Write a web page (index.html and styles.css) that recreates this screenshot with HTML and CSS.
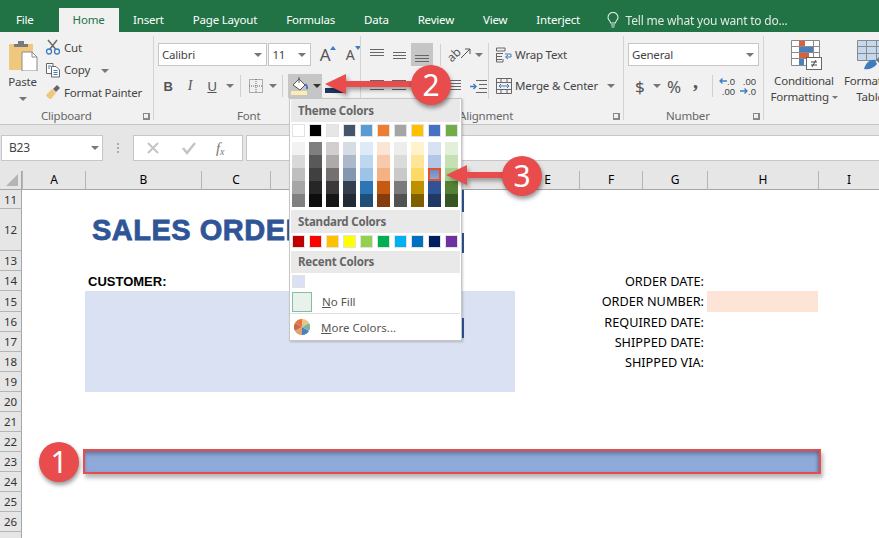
FILE: index.html
```html
<!DOCTYPE html>
<html lang="en">
<head>
    <meta charset="UTF-8">
    <title>Sales Order - Excel</title>
    <link rel="stylesheet" href="styles.css">
</head>
<body>
    <div class="tabs">
        <span class="tab tab-file">File</span>
        <span class="tab tab-active">Home</span>
        <span class="tab">Insert</span>
        <span class="tab">Page Layout</span>
        <span class="tab">Formulas</span>
        <span class="tab">Data</span>
        <span class="tab">Review</span>
        <span class="tab">View</span>
        <span class="tab">Interject</span>
        <span class="tell">
            <svg width="14" height="16" viewBox="0 0 14 16" fill="none" stroke="#fff" stroke-width="1.1"><path d="M4.6 11C4.4 8.8 2 8 2 5.4A5 5 0 0 1 12 5.4C12 8 9.6 8.8 9.4 11Z"/><path d="M5 13H9M5.6 15H8.4"/></svg>
            Tell me what you want to do...
        </span>
    </div>

    <div class="ribbon">
        <!-- Clipboard -->
        <div class="group group-clipboard">
            <div class="group-body clip-body">
                <div class="paste">
                    <svg width="30" height="30" viewBox="0 0 30 30"><rect x="1" y="3" width="24" height="26" rx="1" fill="#efc77d"/><path d="M6 6V3H10V0H16V3H20V6Z" fill="#7a7a7a"/><path d="M14 11H24L29 16V30H14Z" fill="#fff" stroke="#8a8a8a"/><path d="M24 11V16H29" fill="none" stroke="#8a8a8a"/></svg>
                    <span class="paste-label">Paste</span>
                    <span class="caret"></span>
                </div>
                <div class="clip-list">
                    <div class="clip-row">
                        <svg width="16" height="16" viewBox="0 0 16 16" fill="none"><path d="M3 1L10.500 10M12 1L5 10" stroke="#666" stroke-width="1.400"/><circle cx="4" cy="12.500" r="2.500" stroke="#3f7cbf" stroke-width="1.300"/><circle cx="12" cy="12.500" r="2.500" stroke="#3f7cbf" stroke-width="1.300"/></svg>
                        Cut
                    </div>
                    <div class="clip-row">
                        <svg width="16" height="16" viewBox="0 0 16 16" fill="#fff" stroke="#666"><path d="M1.500 1.500H8V11.500H1.500Z"/><path d="M6.500 4.500H11L14.500 8V15H6.500Z"/><path d="M8.500 8.500H12.500M8.500 10.500H12.500M8.500 12.500H12.500M3 4H6M3 6H5" stroke="#3f7cbf"/></svg>
                        Copy <span class="caret caret-copy"></span>
                    </div>
                    <div class="clip-row">
                        <svg width="16" height="16" viewBox="0 0 16 16"><path d="M1 11L7 5L11 9L6 15C4 15 2 13 1 11Z" fill="#efc77d"/><path d="M8 5L12 1L15 4L11 8Z" fill="#666"/></svg>
                        Format Painter
                    </div>
                </div>
            </div>
            <div class="group-label label-clipboard">Clipboard</div>
            <span class="launcher launcher-clipboard"></span>
        </div>

        <!-- Font -->
        <div class="group group-font">
            <div class="group-body stack">
                <div class="row">
                    <div class="combo combo-font">Calibri<span class="caret"></span></div>
                    <div class="combo combo-size">11<span class="caret"></span></div>
                    <span class="big-a">A<i class="tip tip-up"></i></span>
                    <span class="big-a small-a">A<i class="tip tip-down"></i></span>
                </div>
                <div class="row row-tools">
                    <b class="tool tool-b">B</b>
                    <i class="tool tool-i">I</i>
                    <u class="tool tool-u">U</u>
                    <span class="caret caret-u"></span>
                    <span class="sep sep-u"></span>
                    <svg class="border-icon" width="14" height="14" viewBox="0 0 14 14" fill="none" stroke="#666" stroke-dasharray="1 1"><path d="M.5.500H13.500V13.500H.5ZM7 0V14M0 7H14"/></svg>
                    <span class="caret caret-border"></span>
                    <span class="sep sep-border"></span>
                    <div class="fill-btn">
                        <svg width="18" height="20" viewBox="0 0 18 20"><path d="M2 9L8 3L14 9L9 14Z" fill="#fff" stroke="#555"/><path d="M8 1V7" stroke="#555"/><path d="M14.500 8C16 10 16.500 12 15.500 13" stroke="#3f7cbf" stroke-width="2" fill="none"/><rect x="0" y="15" width="16" height="4" fill="#ffecb3"/></svg>
                        <span class="caret caret-dark"></span>
                    </div>
                    <span class="color-bar"></span>
                </div>
            </div>
            <div class="group-label label-font">Font</div>
        </div>

        <!-- Alignment -->
        <div class="group group-align">
            <div class="group-body align-body">
                <div class="align-left">
                    <div class="row">
                        <svg class="align-icon" width="16" height="16" viewBox="0 0 16 16" stroke="#666"><path d="M1 2.500H15M1 5.500H15M1 8.500H15"/></svg>
                        <svg class="align-icon" width="16" height="16" viewBox="0 0 16 16" stroke="#666"><path d="M2 5.500H15M2 8.500H15M2 11.500H15"/></svg>
                        <span class="align-on"><svg width="16" height="16" viewBox="0 0 16 16" stroke="#666"><path d="M1 8.500H15M1 11.500H15M1 14.500H15"/></svg></span>
                        <span class="sep sep-orient"></span>
                        <span class="orient-ab">ab</span>
                        <svg class="orient" width="10" height="10" viewBox="0 0 10 10" fill="none" stroke="#555"><path d="M0 10L9 1M4 1H9V6"/></svg>
                        <span class="caret"></span>
                    </div>
                    <div class="row row-tools">
                        <svg class="align-icon" width="16" height="16" viewBox="0 0 16 16" stroke="#666"><path d="M1 2.500H15M1 11.500H15"/></svg>
                        <svg class="align-icon" width="16" height="16" viewBox="0 0 16 16" stroke="#666"><path d="M1 2.500H15M1 11.500H15"/></svg>
                        <svg class="indent" width="16" height="16" viewBox="0 0 16 16" fill="none" stroke="#666"><path d="M4 2.500H16M1 5.500H16M4 8.500H16M1 11.500H16"/></svg>
                        <svg class="indent-two" width="18" height="16" viewBox="0 0 18 16" fill="none" stroke="#666"><path d="M7 2.500H18M10 6.500H18M10 10.500H18M7 14.500H18"/><path d="M1 8.500H7M4.500 6L7 8.500L4.500 11" stroke="#3f7cbf" stroke-width="1.400"/></svg>
                    </div>
                </div>
                <div class="wrap-list">
                    <div class="wrap-row">
                        <svg width="16" height="16" viewBox="0 0 16 16" fill="none" stroke="#666"><path d="M.5 1H9V4H.5ZM.5 6.500H7M.5 9.500H6M.5 12.500H6"/><path d="M.5 6V15H7V12" /><path d="M9 7H15V10H10M12 8L9.500 10L12 12" stroke="#3f7cbf"/></svg>
                        Wrap Text
                    </div>
                    <div class="wrap-row">
                        <svg width="16" height="16" viewBox="0 0 16 16" fill="none" stroke="#666"><path d="M.5.500H15.500V15.500H.5ZM.5 4.500H15.500M.5 11.500H15.500M5 .5V4.500M11 .5V4.500M5 11.500V15.500M11 11.500V15.500"/><path d="M3 8H13M5 6L3 8L5 10M11 6L13 8L11 10" stroke="#3f7cbf"/></svg>
                        Merge &amp; Center
                        <span class="caret caret-merge"></span>
                    </div>
                </div>
            </div>
            <div class="group-label label-align">Alignment</div>
            <span class="launcher launcher-end"></span>
        </div>

        <!-- Number -->
        <div class="group group-number">
            <div class="group-body stack">
                <div class="row">
                    <div class="combo combo-number">General<span class="caret"></span></div>
                </div>
                <div class="row row-tools num-tools">
                    <span class="num-dollar">$</span>
                    <span class="caret caret-num"></span>
                    <span class="num-pct">%</span>
                    <span class="num-comma">,</span>
                    <span class="sep sep-num"></span>
                    <span class="dec">
                        <i class="dec-line"><svg width="8" height="6" viewBox="0 0 8 6" fill="none" stroke="#3f7cbf" stroke-width="1.300"><path d="M8 3H1M3.500 .5L1 3L3.500 5.500"/></svg>.0</i>
                        <i class="dec-line">.00</i>
                    </span>
                    <span class="dec dec-more">
                        <i class="dec-line">.00</i>
                        <i class="dec-line"><svg width="8" height="6" viewBox="0 0 8 6" fill="none" stroke="#3f7cbf" stroke-width="1.300"><path d="M0 3H7M4.500 .5L7 3L4.500 5.500"/></svg>.0</i>
                    </span>
                </div>
            </div>
            <div class="group-label label-number">Number</div>
            <span class="launcher launcher-end"></span>
        </div>

        <!-- Styles -->
        <div class="group group-styles">
            <div class="style-btn style-cond">
                <svg width="32" height="31" viewBox="0 0 32 31">
                    <path d="M.5.500H28.500V25.500H.5ZM.5 6.500H28.500M.5 12.500H28.500M.5 18.500H28.500M8.500 .5V25.500M22.500 .5V25.500" fill="#fff" stroke="#8a8a8a"/>
                    <rect x="8" y="1" width="6" height="5" fill="#d9603c"/><rect x="8" y="7" width="14" height="5" fill="#4a80bd"/><rect x="8" y="13" width="10" height="5" fill="#d9603c"/><rect x="8" y="19" width="5" height="6" fill="#4a80bd"/>
                    <rect x="15.500" y="17.500" width="15" height="12" fill="#fff" stroke="#666"/>
                    <path d="M20 22H26M20 25H26M25 20L21 27" stroke="#444" fill="none"/>
                </svg>
                <span>Conditional</span>
                <span>Formatting <i class="caret caret-inline"></i></span>
            </div>
            <div class="style-btn style-table">
                <svg width="32" height="31" viewBox="0 0 32 31">
                    <rect x="1" y="1" width="31" height="19" fill="#c5d9ee"/>
                    <path d="M.5.500H32M.5 6.500H32M.5 13.500H32M.5 20.500H20M.5 .5V20.500M9.500 .5V20.500M19.500 .5V20.500" fill="none" stroke="#8a8a8a"/>
                    <path d="M7 29C9 22 14 19 18 20L20 24C17 28 12 30 7 29Z" fill="#3f7cbf"/><path d="M19 20L26 13L29 16L22 23Z" fill="#777"/>
                </svg>
                <span>Format as</span>
                <span>Table</span>
            </div>
        </div>
    </div>

    <div class="formula-area">
        <div class="name-box">B23<span class="caret caret-name"></span></div>
        <span class="dots"></span>
        <div class="fx-box">
            <svg width="14" height="14" viewBox="0 0 14 14" stroke="#c4c4c4" stroke-width="2" fill="none"><path d="M2 2L12 12M12 2L2 12"/></svg>
            <svg width="14" height="14" viewBox="0 0 14 14" stroke="#c4c4c4" stroke-width="2.500" fill="none"><path d="M1 7L5 12L13 2"/></svg>
            <span class="fx">f<sub>x</sub></span>
        </div>
        <div class="formula-input"></div>
    </div>

    <div class="sheet">
        <div class="corner"><span class="corner-mark"></span></div>
        <div class="col-head">A</div>
        <div class="col-head">B</div>
        <div class="col-head">C</div>
        <div class="col-head"></div>
        <div class="col-head">E</div>
        <div class="col-head">F</div>
        <div class="col-head">G</div>
        <div class="col-head">H</div>
        <div class="col-head">I</div>

        <div class="row-head">11</div>
        <div class="row-head">12</div>
        <div class="row-head">13</div>
        <div class="row-head">14</div>
        <div class="row-head">15</div>
        <div class="row-head">16</div>
        <div class="row-head">17</div>
        <div class="row-head">18</div>
        <div class="row-head">19</div>
        <div class="row-head">20</div>
        <div class="row-head">21</div>
        <div class="row-head">22</div>
        <div class="row-head">23</div>
        <div class="row-head">24</div>
        <div class="row-head">25</div>
        <div class="row-head">26</div>
        <div class="row-head"></div>

        <div class="title">SALES ORDER</div>
        <div class="customer">CUSTOMER:</div>
        <div class="customer-box"></div>
        <div class="field field-1">ORDER DATE:</div>
        <div class="field field-2">ORDER NUMBER:</div>
        <div class="field field-3">REQUIRED DATE:</div>
        <div class="field field-4">SHIPPED DATE:</div>
        <div class="field field-5">SHIPPED VIA:</div>
        <div class="order-cell"></div>
        <div class="selected-row"></div>
    </div>

    <!-- color menu, opened over the sheet -->
    <span class="selection-edge"></span>
    <div class="menu">
        <div class="menu-head">Theme Colors</div>
        <div class="swatches" id="themeTop"></div>
        <div class="ramps" id="themeRamps"></div>
        <div class="menu-head menu-head-std">Standard Colors</div>
        <div class="swatches" id="standard"></div>
        <div class="menu-head menu-head-recent">Recent Colors</div>
        <div class="swatches"><span class="swatch swatch-recent"></span></div>
        <div class="menu-item no-fill"><span class="no-fill-box"></span><span><u>N</u>o Fill</span></div>
        <div class="menu-item more">
            <svg width="16" height="16" viewBox="0 0 16 16">
                <path d="M8 8L8 0A8 8 0 0 0 1 4Z" fill="#e8743c"/>
                <path d="M8 8L1 4A8 8 0 0 0 1 12Z" fill="#c9694a"/>
                <path d="M8 8L1 12A8 8 0 0 0 8 16Z" fill="#e0a070"/>
                <path d="M8 8L8 16A8 8 0 0 0 15 12Z" fill="#4a80bd"/>
                <path d="M8 8L15 12A8 8 0 0 0 15 4Z" fill="#7fb5a0"/>
                <path d="M8 8L15 4A8 8 0 0 0 8 0Z" fill="#e8c48a"/>
            </svg>
            <span><u>M</u>ore Colors...</span>
        </div>
    </div>

    <!-- callouts -->
    <svg class="arrow arrow-2" width="92" height="26" viewBox="0 0 92 26"><path d="M0 13L21 3V10H92V16H21V23Z" fill="#e84c4c"/></svg>
    <svg class="arrow arrow-3" width="62" height="26" viewBox="0 0 62 26"><path d="M0 13L21 3V10H62V16H21V23Z" fill="#e84c4c"/></svg>
    <div class="callout callout-1">1</div>
    <div class="callout callout-2">2</div>
    <div class="callout callout-3">3</div>

    <script src="script.js"></script>
</body>
</html>
```

FILE: styles.css
```css
* {
    box-sizing: border-box;
}

html, body {
    margin: 0;
    height: 538px;
    overflow: hidden;
}

body {
    position: relative;
    width: 879px;
    background-color: #fff;
    font-family: "Noto Sans", Arial, sans-serif;
    font-size: 11.5px;
    letter-spacing: -0.2px;
    color: #444;
}

/* tabs */
.tabs {
    display: flex;
    align-items: flex-end;
    height: 32px;
    background-color: #217346;
    color: #fff;
}

.tab {
    height: 24px;
    line-height: 23px;
    padding: 0 14.500px;
    white-space: nowrap;
}

.tab-file {
    padding: 0 25px 0 16px;
}

.tab-active {
    background-color: #f1f1f1;
    color: #217346;
    padding: 0 14px;
    width: 60px;
}

.tell {
    display: flex;
    align-items: center;
    gap: 6px;
    height: 24px;
    margin-left: 11px;
    font-size: 12px;
    white-space: nowrap;
    opacity: 0.85;
}

/* ribbon */
.ribbon {
    display: flex;
    height: 93px;
    background-color: #f1f1f1;
    border-bottom: 1px solid #c6c6c6;
    overflow: hidden;
    white-space: nowrap;
}

.group {
    position: relative;
    display: flex;
    flex-direction: column;
    flex: none;
}

.group::after {
    content: "";
    position: absolute;
    right: 0;
    top: 4px;
    bottom: 4px;
    width: 1px;
    background-color: #d4d4d4;
}

.group-clipboard { width: 154px; }
.group-font { width: 207px; }
.group-align { width: 263px; }
.group-number { width: 140px; }

.group-styles {
    flex-direction: row;
    flex: 1;
}

.group-styles::after {
    display: none;
}

.group-body {
    height: 74px;
}

.group-label {
    height: 18px;
    padding-top: 1px;
    line-height: 18px;
    color: #666;
}

.label-clipboard { padding-left: 41px; }
.label-font { padding-left: 83px; }
.label-align { padding-left: 98px; }
.label-number { padding-left: 42px; }

.launcher {
    position: absolute;
    right: 4px;
    bottom: 4px;
    width: 7px;
    height: 7px;
    border-left: 1px solid #888;
    border-top: 1px solid #888;
    border-right: 2px solid #888;
    border-bottom: 2px solid #888;
}

.caret {
    display: inline-block;
    width: 0;
    height: 0;
    border-left: 4px solid transparent;
    border-right: 4px solid transparent;
    border-top: 4px solid #777;
}

.row {
    display: flex;
    align-items: center;
    height: 23px;
}

.row-tools {
    height: 24px;
    margin-top: 8px;
}

.sep {
    width: 1px;
    height: 22px;
    background-color: #d0d0d0;
}

/* clipboard */
.clip-body {
    display: flex;
}

.paste {
    display: flex;
    flex-direction: column;
    align-items: center;
    width: 43px;
    padding-top: 9px;
    padding-left: 2px;
}

.paste-label {
    line-height: 18px;
    margin-top: 2px;
}

.paste .caret {
    margin-top: 6px;
}

.clip-list {
    padding: 4px 0 0 2px;
}

.clip-row {
    display: flex;
    align-items: center;
    gap: 3px;
    height: 22.500px;
}

.caret-copy {
    margin-left: 8px;
    margin-top: 2px;
}

/* font */
.stack {
    padding: 11px 0 0 4px;
}

.combo {
    position: relative;
    height: 23px;
    line-height: 21px;
    padding-left: 3px;
    background-color: #fff;
    border: 1px solid #c6c6c6;
    color: #444;
}

.combo .caret {
    position: absolute;
    right: 4px;
    top: 9px;
}

.combo-font { width: 110px; }

.combo-size {
    width: 43px;
    margin-left: 1px;
}

.big-a {
    position: relative;
    width: 22px;
    margin-left: 3px;
    text-align: center;
    font-size: 17px;
    line-height: 20px;
    color: #555;
}

.small-a {
    font-size: 14px;
    margin-left: 3px;
}

.tip {
    position: absolute;
    right: 0;
    top: 1px;
    border-left: 3px solid transparent;
    border-right: 3px solid transparent;
}

.tip-up { border-bottom: 4px solid #3f7cbf; }
.tip-down { border-top: 4px solid #3f7cbf; }

.tool {
    width: 22px;
    text-align: center;
    font-family: "Liberation Sans", Arial, sans-serif;
    font-size: 13px;
    color: #555;
}

.tool-b { margin-left: -1px; }
.tool-i { font-family: "Liberation Serif", serif; font-size: 14px; }
.caret-u { margin-left: 3px; }
.sep-u { margin-left: 6px; }
.border-icon { margin-left: 8px; }
.caret-border { margin-left: 6px; }
.sep-border { margin-left: 5px; }

.fill-btn {
    display: flex;
    align-items: center;
    gap: 4px;
    width: 34px;
    height: 24px;
    margin-left: 5px;
    padding-left: 3px;
    background-color: #c6c6c6;
}

.caret-dark {
    border-top-color: #333;
}

.color-bar {
    width: 20px;
    height: 5px;
    margin: 8px 0 0 3px;
    background-color: #1f3864;
}

/* alignment */
.align-body {
    display: flex;
    padding-top: 11px;
}

.align-left {
    width: 127px;
    padding-left: 8px;
}

.align-icon {
    margin-right: 6px;
}

.align-on {
    display: flex;
    align-items: center;
    justify-content: center;
    width: 22px;
    height: 23px;
    margin-left: -2px;
    background-color: #c6c6c6;
}

.sep-orient { margin-left: 7px; }

.orient-ab {
    margin-left: 6px;
    font-size: 12px;
    line-height: 12px;
    color: #555;
    transform: rotate(-45deg);
}

.orient { margin: -4px 4px 0 0; }
.indent { margin-left: 32px; }
.indent-two { margin-left: 8px; }

.wrap-list {
    padding-left: 7px;
    border-left: 1px solid #d4d4d4;
    height: 56px;
}

.wrap-row {
    display: flex;
    align-items: center;
    gap: 3px;
    height: 23px;
    margin-bottom: 8px;
}

.caret-merge {
    margin-left: 6px;
}

/* number */
.combo-number {
    width: 131px;
}

.num-tools {
    padding-left: 7px;
    color: #555;
}

.num-dollar { font-size: 17px; width: 16px; }
.num-pct { font-size: 17px; width: 20px; margin-left: 6px; }

.num-comma {
    width: 10px;
    margin: -10px 0 0 6px;
    font-family: "Liberation Serif", serif;
    font-size: 20px;
    font-weight: 700;
    line-height: 12px;
}

.caret-num { margin-left: 2px; }
.sep-num { margin-left: 9px; }

.dec {
    display: flex;
    flex-direction: column;
    align-items: flex-end;
    gap: 1px;
    width: 15px;
    margin-left: 7px;
    font-family: "Liberation Sans", Arial, sans-serif;
    font-size: 9.500px;
    line-height: 9px;
    letter-spacing: 0;
    color: #444;
}

.dec-more {
    margin-left: 6px;
}

.dec-line {
    display: flex;
    align-items: center;
    font-style: normal;
}

/* styles */
.style-btn {
    display: flex;
    flex-direction: column;
    align-items: center;
    padding-top: 8px;
    line-height: 16px;
}

.style-btn svg {
    margin-bottom: 2px;
    margin-left: 5px;
    flex: none;
}

.style-cond {
    width: 80px;
}

.style-table {
    width: 52px;
}

.caret-inline {
    vertical-align: middle;
    border-left-width: 3px;
    border-right-width: 3px;
    border-top-width: 3px;
}

/* formula bar */
.formula-area {
    display: flex;
    align-items: flex-start;
    height: 46px;
    padding-top: 10px;
    background-color: #e6e6e6;
}

.name-box {
    position: relative;
    width: 102px;
    height: 26px;
    margin-left: 1px;
    padding-left: 7px;
    line-height: 24px;
    font-size: 12px;
    background-color: #fff;
    border: 1px solid #c6c6c6;
}

.caret-name {
    position: absolute;
    right: 3px;
    top: 10px;
}

.dots {
    width: 2px;
    height: 10px;
    margin: 8px 14px 0 14px;
    border-left: 2px dotted #aaa;
}

.fx-box {
    display: flex;
    align-items: center;
    gap: 22px;
    width: 110px;
    height: 26px;
    padding-left: 12px;
    background-color: #fff;
    border: 1px solid #c6c6c6;
}

.fx {
    font-family: "Liberation Serif", serif;
    font-style: italic;
    font-size: 15px;
    color: #777;
    margin-left: -2px;
}

.fx sub {
    font-size: 10px;
    vertical-align: -2px;
    line-height: 0;
}

.formula-input {
    flex: 1;
    height: 26px;
    margin-left: 3px;
    background-color: #fff;
    border: 1px solid #c6c6c6;
    border-right: none;
}

/* sheet */
.sheet {
    display: grid;
    grid-template-columns: 22px 63px 116px 69px 245px 64px 63px 65px 111px 61px;
    grid-template-rows: 19px 19px 42px 20px 20px 21px repeat(12, 20px) 6px;
    background-color: #fff;
    color: #000;
    letter-spacing: 0;
}

.corner {
    position: relative;
    background-color: #e6e6e6;
    border-right: 1px solid #a6a6a6;
    border-bottom: 1px solid #a6a6a6;
}

.corner-mark {
    position: absolute;
    right: 3px;
    bottom: 3px;
    border-left: 12px solid transparent;
    border-bottom: 12px solid #b5b5b5;
}

.col-head {
    background-color: #e6e6e6;
    border-left: 1px solid #b5b5b5;
    border-bottom: 1px solid #a6a6a6;
    text-align: center;
    line-height: 18px;
    font-size: 12px;
}

.row-head {
    grid-column: 1;
    display: flex;
    align-items: center;
    justify-content: center;
    background-color: #e6e6e6;
    border-right: 1px solid #a6a6a6;
    border-bottom: 1px solid #b5b5b5;
    font-size: 11.500px;
    color: #333;
}

.title {
    grid-column: 3 / 6;
    grid-row: 3;
    align-self: center;
    padding-left: 7px;
    font-family: "Liberation Sans", Arial, sans-serif;
    font-weight: 700;
    font-size: 29px;
    letter-spacing: 0.5px;
    color: #2f5597;
    -webkit-text-stroke: 0.8px #2f5597;
    white-space: nowrap;
}

.customer {
    grid-column: 3 / 5;
    grid-row: 5;
    padding-left: 3px;
    font-family: "Liberation Sans", Arial, sans-serif;
    font-weight: 700;
    font-size: 13px;
    line-height: 21px;
}

.customer-box {
    grid-column: 3 / 6;
    grid-row: 6 / 11;
    background-color: #d9e1f2;
}

.field {
    grid-column: 7 / 9;
    padding-right: 3px;
    text-align: right;
    font-size: 12.700px;
    line-height: 21px;
    white-space: nowrap;
}

.field-1 { grid-row: 5; }
.field-2 { grid-row: 6; }
.field-3 { grid-row: 7; }
.field-4 { grid-row: 8; }
.field-5 { grid-row: 9; }

.order-cell {
    grid-column: 9;
    grid-row: 6;
    background-color: #fce4d6;
}

.selected-row {
    grid-column: 3 / 10;
    grid-row: 14;
    margin: -3px -3px -2px -2px;
    background-color: #8eaadb;
    border: 2px solid #e84c4c;
    box-shadow: inset 0 4px 4px -1px rgba(50, 60, 90, 0.45), inset -3px 0 3px -1px rgba(50, 60, 90, 0.3), 2px 4px 4px rgba(0, 0, 0, 0.28);
}

/* color menu */
.selection-edge {
    position: absolute;
    left: 462px;
    top: 190px;
    width: 2px;
    height: 148px;
    background: linear-gradient(#2f5597 0 22px, transparent 22px 43px, #2f5597 43px 63px, transparent 63px 128px, #2f5597 128px);
}

.menu {
    position: absolute;
    left: 289px;
    top: 98px;
    width: 173px;
    height: 243px;
    background-color: #fff;
    border: 1px solid #c6c6c6;
    box-shadow: 1px 1px 2px rgba(0, 0, 0, 0.2);
}

.menu-head {
    height: 23px;
    margin: 0 1px;
    padding-left: 7px;
    line-height: 24px;
    background-color: #e9e9e9;
    font-weight: 700;
    color: #666;
}

.menu-head-std {
    margin-top: 3px;
}

.menu-head-recent {
    margin-top: 3px;
    height: 22px;
    line-height: 22px;
}

.swatches {
    display: flex;
    gap: 4px;
    padding: 2px 0 0 2px;
}

.swatch {
    width: 13px;
    height: 13px;
    flex: none;
    border: 1px solid #e2e2e2;
}

.swatch-recent {
    background-color: #d9e1f2;
}

.ramps {
    display: flex;
    gap: 4px;
    padding: 5px 0 0 2px;
}

.ramp {
    display: flex;
    flex-direction: column;
    width: 13px;
    height: 65px;
    outline: 1px solid #e2e2e2;
    outline-offset: -1px;
}

.ramp-cell {
    position: relative;
    height: 13px;
}

.ramp-cell-on::after {
    content: "";
    position: absolute;
    left: 0;
    right: 0;
    top: 0;
    bottom: 0;
    background: linear-gradient(#6c8bbf, #8ca6d4);
    border: 2px solid #e8502c;
}

.menu-item {
    display: flex;
    align-items: center;
    color: #555;
    letter-spacing: 0;
}

.no-fill {
    gap: 10px;
    height: 26px;
    margin-right: 1px;
    padding: 4px 0 2px 2px;
    border-bottom: 1px solid #e0e0e0;
}

.no-fill-box {
    width: 20px;
    height: 20px;
    background-color: #e9f1ec;
    border: 1px solid #86bf9f;
}

.more {
    gap: 11px;
    height: 26px;
    padding-left: 4px;
}

/* callouts */
.arrow {
    position: absolute;
    filter: drop-shadow(2px 3px 2px rgba(0, 0, 0, 0.35));
}

.arrow-2 {
    left: 325px;
    top: 71px;
}

.arrow-3 {
    left: 446px;
    top: 162px;
}

.callout {
    position: absolute;
    width: 40px;
    height: 40px;
    border-radius: 50%;
    background-color: #e84c4c;
    color: #fff;
    text-align: center;
    font-size: 30px;
    line-height: 39px;
    box-shadow: 1px 3px 4px rgba(0, 0, 0, 0.4);
}

.callout-1 { left: 39px; top: 442px; }
.callout-2 { left: 411px; top: 65px; }
.callout-3 { left: 502px; top: 156px; }
```

FILE: script.js
```js
// first row of the palette, then the tints under each color
const themeTop = ['#ffffff', '#000000', '#e7e6e6', '#44546a', '#5b9bd5', '#ed7d31', '#a5a5a5', '#ffc000', '#4472c4', '#70ad47'];
const themeRamps = [
    ['#f2f2f2', '#d9d9d9', '#bfbfbf', '#a6a6a6', '#808080'],
    ['#7f7f7f', '#595959', '#404040', '#262626', '#0d0d0d'],
    ['#d0cece', '#aeaaaa', '#757070', '#3a3838', '#171616'],
    ['#d6dce4', '#adb9ca', '#8497b0', '#333f4f', '#222b35'],
    ['#deeaf6', '#bdd7ee', '#9dc3e6', '#2e75b6', '#1f4e79'],
    ['#fbe5d5', '#f7caac', '#f4b183', '#c55a11', '#843c0c'],
    ['#ededed', '#dbdbdb', '#c9c9c9', '#7b7b7b', '#525252'],
    ['#fff2cc', '#ffe599', '#ffd966', '#bf9000', '#7f6000'],
    ['#d9e2f3', '#b4c6e7', '#8eaadb', '#2f5496', '#1f3864'],
    ['#e2efd9', '#c5e0b3', '#a8d08d', '#538135', '#375623']
];
const standard = ['#c00000', '#ff0000', '#ffc000', '#ffff00', '#92d050', '#00b050', '#00b0f0', '#0070c0', '#002060', '#7030a0'];

function addSwatches(id, colors) {
    const box = document.getElementById(id);
    colors.forEach(function (color) {
        const span = document.createElement('span');
        span.className = 'swatch';
        span.style.backgroundColor = color;
        box.appendChild(span);
    });
}

addSwatches('themeTop', themeTop);
addSwatches('standard', standard);

const ramps = document.getElementById('themeRamps');
themeRamps.forEach(function (colors, col) {
    const ramp = document.createElement('div');
    ramp.className = 'ramp';
    colors.forEach(function (color, row) {
        const cell = document.createElement('span');
        cell.className = 'ramp-cell';
        if (col === 8 && row === 2) cell.className += ' ramp-cell-on';
        cell.style.backgroundColor = color;
        ramp.appendChild(cell);
    });
    ramps.appendChild(ramp);
});
```
